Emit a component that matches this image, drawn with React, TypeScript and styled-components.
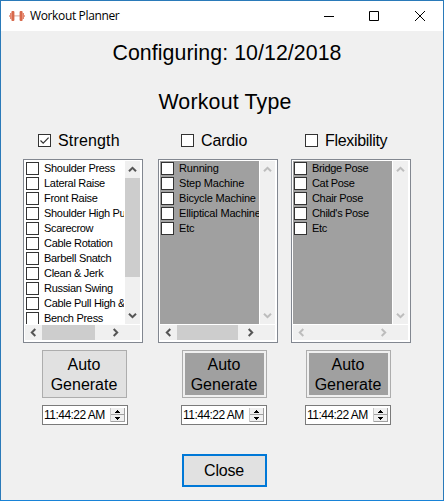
import React from "react";
import styled, { createGlobalStyle } from "styled-components";

const Global = createGlobalStyle`
  *, *::before, *::after { box-sizing: border-box; }
  body { margin: 0; background: #f0f0f0; }
`;

const Window = styled.div`
  width: 444px;
  height: 501px;
  display: flex;
  flex-direction: column;
  border: 1px solid #2a7ab9;
  border-bottom-color: #1883d7;
  background: #f0f0f0;
  color: #000;
  font-family: "Liberation Sans", Arial, sans-serif;
  overflow: hidden;
`;

const TitleBar = styled.header`
  display: flex;
  align-items: center;
  height: 30px;
  flex: none;
  padding-left: 8px;
  background: #fff;
`;

const TitleText = styled.span`
  flex: 1;
  margin-left: 5px;
  font: 12px/28px "Open Sans", "Noto Sans", sans-serif;
  letter-spacing: -0.36px;
  white-space: nowrap;
`;

const CaptionButton = styled.button`
  width: 44px;
  height: 30px;
  padding: 0 0 1px;
  border: 0;
  background: transparent;
  display: grid;
  place-items: center;
  & + & { width: 46px; }
`;

const Heading = styled.h1<{ $top: number; $shift: number; $spacing: number }>`
  margin: ${(p) => p.$top}px 0 0 ${(p) => p.$shift}px;
  font-size: 21.33px;
  line-height: 24px;
  font-weight: 400;
  text-align: center;
  letter-spacing: ${(p) => p.$spacing}px;
`;

const Columns = styled.main`
  display: grid;
  grid-template-columns: 120px 120px 120px;
  column-gap: 14px;
  margin: 16px 0 0 22px;
  & > :nth-child(2) { margin-left: 1px; }
`;

const Column = styled.section`
  display: flex;
  flex-direction: column;
  width: 120px;
`;

const CategoryLabel = styled.label<{ $indent: number; $spacing: number }>`
  display: flex;
  align-items: center;
  gap: 7px;
  height: 20px;
  padding-left: ${(p) => p.$indent}px;
  font-size: 16px;
  line-height: 20px;
  letter-spacing: ${(p) => p.$spacing}px;
`;

const LabelText = styled.span`
  padding-top: 2px;
`;

const Box = styled.span`
  width: 13px;
  height: 13px;
  flex: none;
  display: grid;
  place-items: center;
  border: 1px solid #333;
  background: #fff;
`;

const ListFrame = styled.div`
  display: grid;
  grid-template-columns: 99px 17px;
  grid-template-rows: 163px 17px;
  width: 120px;
  height: 184px;
  margin-top: 9px;
  padding: 1px;
  border: 1px solid #828790;
  background: #fff;
`;

const Items = styled.ul<{ $dim: boolean; $spacing: number }>`
  margin: 0;
  padding: 0;
  list-style: none;
  overflow: hidden;
  letter-spacing: ${(p) => p.$spacing}px;
  background: ${(p) => (p.$dim ? "#a0a0a0" : "#fff")};
`;

const Item = styled.li`
  display: flex;
  align-items: center;
  gap: 5px;
  height: 15px;
  padding-left: 1px;
  font-size: 11px;
  line-height: 15px;
  white-space: nowrap;
`;

const VScroll = styled.div`
  display: flex;
  flex-direction: column;
  width: 15px;
  margin-left: 1px;
  background: #f0f0f0;
`;

const HScroll = styled.div`
  display: flex;
  grid-column: 1 / 3;
  height: 15px;
  margin: 1px 1px 0 0;
  padding-right: 16px;
  background: #f0f0f0;
`;

const Arrow = styled.span<{ $vertical: boolean }>`
  width: ${(p) => (p.$vertical ? 15 : 17)}px;
  height: ${(p) => (p.$vertical ? 17 : 15)}px;
  flex: none;
  display: grid;
  place-items: center;
`;

const Track = styled.div<{ $vertical?: boolean }>`
  flex: 1;
  display: flex;
  flex-direction: ${(p) => (p.$vertical ? "column" : "row")};
`;

const Thumb = styled.div<{ $size: number; $vertical?: boolean }>`
  background: #cdcdcd;
  flex: none;
  width: ${(p) => (p.$vertical ? "auto" : `${p.$size}px`)};
  height: ${(p) => (p.$vertical ? `${p.$size}px` : "auto")};
`;

const GenerateButton = styled.button<{ $dim: boolean; $indent: number }>`
  width: 85px;
  height: 48px;
  margin: 7px 0 0 ${(p) => p.$indent}px;
  padding: ${(p) => (p.$dim ? 2 : 0)}px;
  border: 1px solid #adadad;
  background: ${(p) => (p.$dim ? "#a0a0a0 content-box" : "#e1e1e1")};
  color: #000;
  font: 16px/20px "Liberation Sans", Arial, sans-serif;
  display: flex;
  align-items: center;
  justify-content: center;
`;

const GenerateText = styled.span`
  padding: 1px 1px 0 0;
`;

const TimeField = styled.div<{ $indent: number }>`
  display: flex;
  align-items: center;
  justify-content: space-between;
  width: 86px;
  height: 20px;
  margin: 7px 0 0 ${(p) => p.$indent}px;
  padding: 0 1px 0 1px;
  border: 1px solid #7a7a7a;
  background: #fff;
  font-size: 12px;
  letter-spacing: -0.52px;
  white-space: nowrap;
`;

const Footer = styled.footer`
  margin: 29px 0 0 181px;
`;

const CloseButton = styled.button`
  display: block;
  width: 85px;
  height: 33px;
  padding: 0 1px 0 0;
  border: 2px solid #0078d7;
  background: #e1e1e1;
  color: #000;
  font: 16px/20px "Liberation Sans", Arial, sans-serif;
  letter-spacing: -0.2px;
`;

const Dumbbell = () => (
  <svg width="16" height="12" viewBox="0 0 16 12">
    <path d="M5 5.4h6v1H5z" fill="#d9a99c" />
    <rect x="2.4" y="1" width="3" height="10" rx="1" fill="#d8694b" />
    <rect x="10.6" y="1" width="3" height="10" rx="1" fill="#d8694b" />
    <path d="M1 3h1.6v6H1zM13.4 3H15v6h-1.6z" fill="#e5866e" />
    <path d="M0 5h1v2H0zM15 5h1v2h-1z" fill="#e9a796" />
  </svg>
);

const rotation = { up: 0, right: 90, down: 180, left: 270 };

const Chevron = ({ dir, faded }: { dir: keyof typeof rotation; faded?: boolean }) => (
  <Arrow $vertical={dir === "up" || dir === "down"}>
    <svg width="9" height="9" viewBox="0 0 9 9">
      <path
        d="M1 6.3 4.5 2.8 8 6.3"
        fill="none"
        stroke={faded ? "#bdbdbd" : "#555"}
        strokeWidth="2"
        transform={`rotate(${rotation[dir]} 4.5 4.5)`}
      />
    </svg>
  </Arrow>
);

const Spinner = () => (
  <svg width="16" height="16" viewBox="0 0 16 16" shapeRendering="crispEdges">
    <path d="M1 1h14v14H1z" fill="#f0f0f0" />
    <path d="M0 7h15v1H0zM0 14h15v1H0zM14 1h1v14h-1z" fill="#a0a0a0" />
    <path d="M0 1h1v14H0z" fill="#c8c8c8" />
    <path d="M7 3h1v1h1v1h1v1H5V5h1V4h1zM5 10h5v1H9v1H8v1H7v-1H6v-1H5z" fill="#000" />
  </svg>
);

interface Category {
  name: string;
  checked: boolean;
  items: string[];
  itemSpacing: number;
  labelIndent: number;
  labelSpacing: number;
  buttonIndent: number;
  timeIndent: number;
  vThumb: number;
  hThumb: number;
}

const categories: Category[] = [
  {
    name: "Strength", checked: true, labelIndent: 15, labelSpacing: 0.15, itemSpacing: -0.3,
    buttonIndent: 19, timeIndent: 19, vThumb: 99, hThumb: 53,
    items: [
      "Shoulder Press", "Lateral Raise", "Front Raise", "Shoulder High Pull",
      "Scarecrow", "Cable Rotation", "Barbell Snatch", "Clean & Jerk",
      "Russian Swing", "Cable Pull High & Low", "Bench Press",
    ],
  },
  {
    name: "Cardio", checked: false, labelIndent: 23, labelSpacing: -0.15, itemSpacing: -0.18,
    buttonIndent: 24, timeIndent: 23, vThumb: 0, hThumb: 61,
    items: ["Running", "Step Machine", "Bicycle Machine", "Elliptical Machine", "Etc"],
  },
  {
    name: "Flexibility", checked: false, labelIndent: 14, labelSpacing: -0.32, itemSpacing: -0.34,
    buttonIndent: 15, timeIndent: 14, vThumb: 0, hThumb: 0,
    items: ["Bridge Pose", "Cat Pose", "Chair Pose", "Child's Pose", "Etc"],
  },
];

const CategoryColumn = ({ c }: { c: Category }) => (
  <Column>
    <CategoryLabel $indent={c.labelIndent} $spacing={c.labelSpacing}>
      <Box>
        {c.checked && (
          <svg width="11" height="11" viewBox="0 0 11 11">
            <path d="M1.5 5.5 4.2 8.2 9.6 2.6" fill="none" stroke="#333" strokeWidth="1.2" />
          </svg>
        )}
      </Box>
      <LabelText>{c.name}</LabelText>
    </CategoryLabel>
    <ListFrame>
      <Items $dim={!c.checked} $spacing={c.itemSpacing}>
        {c.items.map((item) => (
          <Item key={item}><Box />{item}</Item>
        ))}
      </Items>
      <VScroll>
        <Chevron dir="up" faded={!c.vThumb} />
        <Track $vertical>{c.vThumb > 0 && <Thumb $vertical $size={c.vThumb} />}</Track>
        <Chevron dir="down" faded={!c.vThumb} />
      </VScroll>
      <HScroll>
        <Chevron dir="left" faded={!c.hThumb} />
        <Track>{c.hThumb > 0 && <Thumb $size={c.hThumb} />}</Track>
        <Chevron dir="right" faded={!c.hThumb} />
      </HScroll>
    </ListFrame>
    <GenerateButton $dim={!c.checked} $indent={c.buttonIndent}>
      <GenerateText>Auto<br />Generate</GenerateText>
    </GenerateButton>
    <TimeField $indent={c.timeIndent}>
      <span>11:44:22 AM</span>
      <Spinner />
    </TimeField>
  </Column>
);

export default function App() {
  return (
    <>
      <Global />
      <Window>
        <TitleBar>
          <Dumbbell />
          <TitleText>Workout Planner</TitleText>
          <CaptionButton aria-label="Minimize">
            <svg width="10" height="10"><path d="M0 5h10v1H0z" /></svg>
          </CaptionButton>
          <CaptionButton aria-label="Maximize">
            <svg width="10" height="10"><path d="M.5.5h9v9h-9z" fill="none" stroke="#000" /></svg>
          </CaptionButton>
          <CaptionButton aria-label="Close window">
            <svg width="10" height="10"><path d="m0 0 10 10M10 0 0 10" stroke="#000" /></svg>
          </CaptionButton>
        </TitleBar>
        <Heading $top={10} $shift={10} $spacing={0.06}>Configuring: 10/12/2018</Heading>
        <Heading $top={25} $shift={6} $spacing={0.2}>Workout Type</Heading>
        <Columns>
          {categories.map((c) => <CategoryColumn key={c.name} c={c} />)}
        </Columns>
        <Footer><CloseButton>Close</CloseButton></Footer>
      </Window>
    </>
  );
}
